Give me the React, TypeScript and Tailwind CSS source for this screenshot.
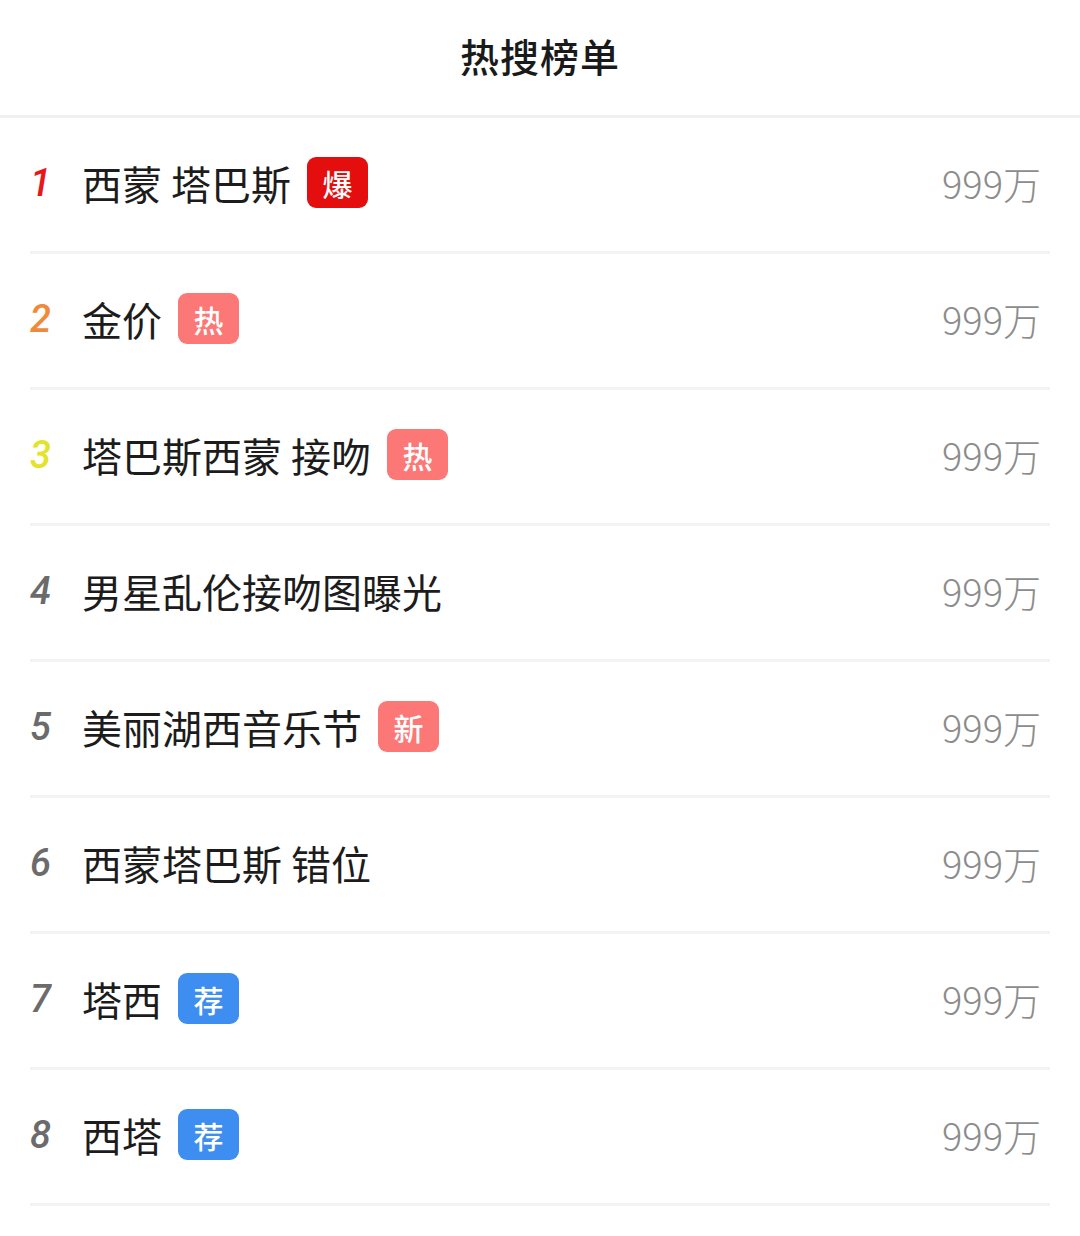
const ITEMS = [
  { title: "西蒙 塔巴斯", tag: "爆" },
  { title: "金价", tag: "热" },
  { title: "塔巴斯西蒙 接吻", tag: "热" },
  { title: "男星乱伦接吻图曝光", tag: "" },
  { title: "美丽湖西音乐节", tag: "新" },
  { title: "西蒙塔巴斯 错位", tag: "" },
  { title: "塔西", tag: "荐" },
  { title: "西塔", tag: "荐" },
];

const RANK_COLORS = [
  "text-[#e8171b]",
  "text-[#f08a3b]",
  "text-[#e3e32a]",
  "text-[#6b6b6b]",
  "text-[#6b6b6b]",
  "text-[#6b6b6b]",
  "text-[#6b6b6b]",
  "text-[#6b6b6b]",
];

const TAG_COLORS: Record<string, string> = {
  爆: "bg-[#e50e0e]",
  热: "bg-[#fb7876]",
  新: "bg-[#fb7876]",
  荐: "bg-[#3d8ef0]",
};

function Tag({ label }: { label: string }) {
  return (
    <span
      className={`ml-4 flex h-[51px] w-[61px] items-center justify-center rounded-[9px] text-[30px] font-medium leading-none text-white ${TAG_COLORS[label]}`}
    >
      {label}
    </span>
  );
}

export default function App() {
  return (
    <div
      className="min-h-[1236px] w-full bg-white"
      style={{ fontFamily: '"Noto Sans CJK SC", "Noto Sans", sans-serif' }}
    >
      {/* Header */}
      <div className="flex h-[118px] items-center justify-center border-b-[3px] border-[#f0f0f0] pb-[4px]">
        <h1 className="text-[39px] font-medium tracking-[1px] text-[#1a1a1a]">
          热搜榜单
        </h1>
      </div>

      {/* List */}
      <div className="px-[30px]">
        {ITEMS.map((item, i) => (
          <div
            key={i}
            className="flex h-[136px] items-center border-b-[3px] border-[#f3f3f3] pb-[4px]"
          >
            <span
              className={`w-[52px] text-[38px] font-medium italic leading-none ${RANK_COLORS[i]}`}
              style={{ fontFamily: "Roboto, sans-serif" }}
            >
              {i + 1}
            </span>
            <span className="text-[40px] leading-none text-[#1c1c1c]">
              {item.title}
            </span>
            {item.tag && <Tag label={item.tag} />}
            <span className="ml-auto mr-[9px] text-[38px] font-light leading-none text-[#8c8c8c]">
              999万
            </span>
          </div>
        ))}
      </div>
    </div>
  );
}
